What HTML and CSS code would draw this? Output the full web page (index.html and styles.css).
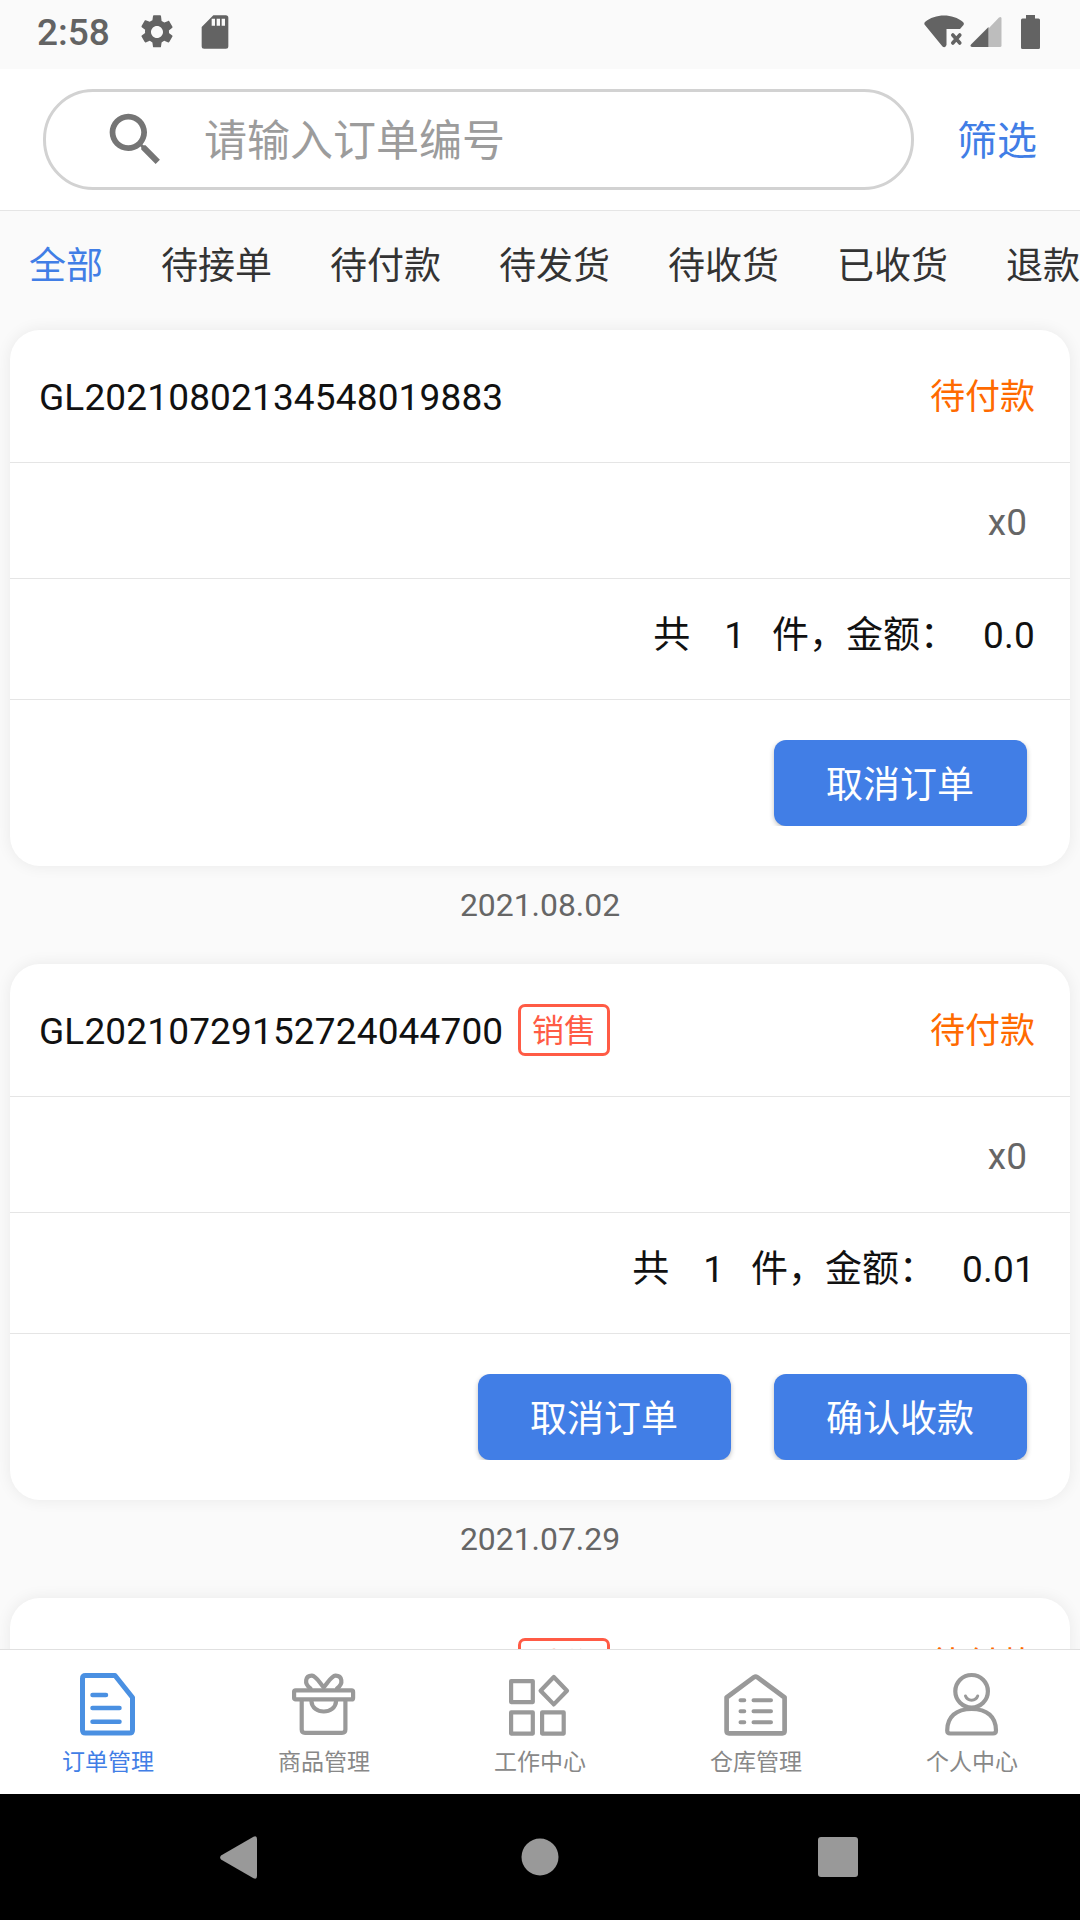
FILE: index.html
```html
<!DOCTYPE html>
<html lang="zh-CN">
<head>
    <meta charset="UTF-8">
    <meta name="viewport" content="width=device-width, initial-scale=1.0">
    <title>订单管理</title>
    <link rel="stylesheet" href="styles.css">
</head>
<body>
    <div class="app">
        <div class="status-bar">
            <span class="clock">2:58</span>
            <svg class="status-icon gear" viewBox="0 0 24 24"><path d="M19.14 12.94c.04-.3.06-.61.06-.94 0-.32-.02-.64-.07-.94l2.03-1.58c.18-.14.23-.41.12-.61l-1.92-3.32c-.12-.22-.37-.29-.59-.22l-2.39.96c-.5-.38-1.03-.7-1.62-.94L14.4 2.4c-.04-.24-.24-.4-.48-.4h-3.84c-.24 0-.43.16-.47.4l-.36 2.55c-.59.24-1.13.57-1.62.94l-2.39-.96c-.22-.08-.47 0-.59.22L2.74 8.47c-.12.21-.08.47.12.61l2.03 1.58c-.05.3-.09.63-.09.94s.02.64.07.94l-2.03 1.58c-.18.14-.23.41-.12.61l1.92 3.32c.12.22.37.29.59.22l2.39-.96c.5.38 1.03.7 1.62.94l.36 2.54c.05.24.24.41.48.41h3.84c.24 0 .44-.17.47-.41l.36-2.54c.59-.24 1.13-.56 1.62-.94l2.39.96c.22.08.47 0 .59-.22l1.92-3.32c.12-.22.07-.47-.12-.61l-2.01-1.58zM12 15.6c-1.98 0-3.6-1.62-3.6-3.6s1.62-3.6 3.6-3.6 3.6 1.62 3.6 3.6-1.62 3.6-3.6 3.6z"/></svg>
            <svg class="status-icon" viewBox="0 0 24 24"><path d="M18.500 2h-7.500L4 9V20.500Q4 22 5.500 22h13Q20 22 20 20.500V3.500Q20 2 18.500 2zM12 8.300h-2V4h2zM15 8.300h-2V4h2zM18 8.300h-2V4h2z"/></svg>
            <div class="status-right">
                <svg class="wifi" width="40" height="34" viewBox="0 0 40 34"><path d="M1 7C11-1.700 29-1.700 39 7Q40.500 8.500 39.500 10L36 14H22.500V30Q21 33.500 18.500 31.500L.500 9.500Q0 8 1 7z"/><path d="M28.800 20l7 8M35.800 20l-7 8" fill="none" stroke="#636363" stroke-width="3.600" stroke-linecap="round"/></svg>
                <svg class="signal" width="32" height="32" viewBox="0 0 32 32"><path d="M18.500 12.500L29 1.500Q31.500 0 31.500 2.500V29.500Q31.500 31 30 31H18.500z" fill="#bdbdbd"/><path d="M18.500 11V31H2Q-.500 30.500 1 28.500z"/></svg>
                <svg width="19" height="34" viewBox="0 0 19 34"><path d="M5 0h9v3.500h3.500Q19 3.500 19 5v27.500Q19 34 17.500 34h-16Q0 34 0 32.500V5Q0 3.500 1.500 3.500H5z"/></svg>
            </div>
        </div>

        <header class="header">
            <div class="search-box">
                <svg class="search-icon" viewBox="0 0 24 24"><path d="M15.5 14h-.79l-.28-.27C15.41 12.590 16 11.110 16 9.500 16 5.910 13.090 3 9.500 3S3 5.910 3 9.500 5.910 16 9.500 16c1.610 0 3.090-.59 4.230-1.570l.27.28v.79l5 4.990L20.490 19l-4.990-5zm-6 0C7.010 14 5 11.990 5 9.500S7.010 5 9.500 5 14 7.010 14 9.500 11.990 14 9.500 14z"/></svg>
                <span class="placeholder">请输入订单编号</span>
            </div>
            <a class="filter">筛选</a>
        </header>

        <nav class="tabs">
            <a class="tab active">全部</a>
            <a class="tab">待接单</a>
            <a class="tab">待付款</a>
            <a class="tab">待发货</a>
            <a class="tab">待收货</a>
            <a class="tab">已收货</a>
            <a class="tab">退款</a>
        </nav>

        <main class="order-list">
            <section class="card">
                <div class="card-head">
                    <span class="order-no">GL20210802134548019883</span>
                    <span class="state">待付款</span>
                </div>
                <div class="goods">x0</div>
                <div class="total">
                    <span>共</span>
                    <span class="count">1</span>
                    <span>件，金额：</span>
                    <span class="amount">0.0</span>
                </div>
                <div class="actions">
                    <button class="btn">取消订单</button>
                </div>
            </section>
            <p class="date">2021.08.02</p>

            <section class="card">
                <div class="card-head">
                    <span class="order-no">GL20210729152724044700</span>
                    <span class="tag">销售</span>
                    <span class="state">待付款</span>
                </div>
                <div class="goods">x0</div>
                <div class="total">
                    <span>共</span>
                    <span class="count">1</span>
                    <span>件，金额：</span>
                    <span class="amount">0.01</span>
                </div>
                <div class="actions">
                    <button class="btn">取消订单</button>
                    <button class="btn">确认收款</button>
                </div>
            </section>
            <p class="date">2021.07.29</p>

            <section class="card">
                <div class="card-head">
                    <span class="order-no"></span>
                    <span class="tag">销售</span>
                    <span class="state">待付款</span>
                </div>
            </section>
        </main>

        <footer class="bottom-bar">
            <a class="bottom-item active">
                <svg viewBox="0 0 66 66" stroke-width="5">
                    <path d="M10.500 4.500H40L57.500 26.500V59Q57.500 62 54.500 62H10.500Q7.500 62 7.500 59V7.500Q7.500 4.500 10.500 4.500z"/>
                    <path d="M17.500 24H31M17.500 37H44.500M17.500 50.700H44.500" stroke-width="4.500"/>
                </svg>
                <span>订单管理</span>
            </a>
            <a class="bottom-item">
                <svg viewBox="0 0 66 66" stroke-width="4.200">
                    <rect x="3.100" y="19.400" width="59" height="9" rx="1.500"/>
                    <path d="M10.700 30V58.500Q10.700 61.800 14 61.800H51Q54.400 61.800 54.400 58.500V30"/>
                    <path d="M20.400 30C21 44 44.500 44 45.100 30"/>
                    <path d="M19.500 17.500C12.500 12.500 14.500 4.500 21 4.700C25 5 28 11 32.700 16.500C37.400 11 40.400 5 44.400 4.700C51 4.500 53 12.500 46 17.500"/>
                </svg>
                <span>商品管理</span>
            </a>
            <a class="bottom-item">
                <svg viewBox="0 0 66 66" stroke-width="4.200">
                    <rect x="4.100" y="10.100" width="21.700" height="21"/>
                    <rect x="4.100" y="41.400" width="21.700" height="21.200"/>
                    <rect x="35.100" y="41.400" width="21.600" height="21.200"/>
                    <path d="M46.800 6L60 19.700L46.800 33.400L33.600 19.700z"/>
                </svg>
                <span>工作中心</span>
            </a>
            <a class="bottom-item">
                <svg viewBox="0 0 66 66" stroke-width="4.700">
                    <path d="M3.600 26.500L31 6.200Q32.600 5.200 34.200 6.200L61.600 26.500V60Q61.600 62.300 59.300 62.300H6Q3.600 62.300 3.600 60z"/>
                    <path d="M17.500 29.300H21.300M30.500 29.300H48M17.500 40.300H21.300M30.500 40.300H48M17.500 51.300H21.300M30.500 51.300H48" stroke-width="4"/>
                </svg>
                <span>仓库管理</span>
            </a>
            <a class="bottom-item">
                <svg viewBox="0 0 66 66" stroke-width="4.200">
                    <circle cx="32.600" cy="20.300" r="16.300"/>
                    <path d="M26.500 25C28.500 30.500 36.700 30.500 38.700 25" stroke-width="3"/>
                    <path d="M32.600 38C17 38 8.200 46 8.200 59.500Q8.200 62.500 11.200 62.500H54Q57 62.500 57 59.500C57 46 48.200 38 32.600 38z"/>
                </svg>
                <span>个人中心</span>
            </a>
        </footer>

        <div class="system-nav">
            <svg width="37" height="43" viewBox="0 0 37 43"><path d="M33.500.800Q37-.700 37 3V40Q37 43.700 33.500 42.200L1 23.500Q-.700 21.500 1 19.500z"/></svg>
            <svg class="home" width="38" height="38" viewBox="0 0 38 38"><circle cx="19" cy="19" r="18.500"/></svg>
            <svg width="40" height="40" viewBox="0 0 40 40"><rect width="40" height="40" rx="3"/></svg>
        </div>
    </div>
</body>
</html>
```

FILE: styles.css
```css
* {
    box-sizing: border-box;
}

body {
    margin: 0;
    background-color: #fafafa;
    font-family: Roboto, "Noto Sans CJK SC", sans-serif;
    font-size: 37px;
    color: #111;
}

.app {
    display: flex;
    flex-direction: column;
    width: 1080px;
    height: 1920px;
    overflow: hidden;
}

/* Status bar */
.status-bar {
    display: flex;
    align-items: center;
    height: 69px;
    padding: 0 39px 6px 37px;
    color: #636363;
    fill: #636363;
}

.clock {
    width: 100px;
    padding-top: 3px;
    font-size: 37px;
    font-weight: 500;
    line-height: 40px;
}

.status-icon {
    width: 40px;
    height: 40px;
    margin-right: 18px;
}

.status-right {
    display: flex;
    align-items: flex-end;
    margin-left: auto;
    padding-right: 1px;
}

.wifi {
    margin-right: 6px;
}

.signal {
    margin-right: 19px;
    margin-bottom: 1px;
}

/* Search */
.header {
    display: flex;
    align-items: center;
    height: 142px;
    padding: 0 43px;
    background-color: #fff;
    border-bottom: 1px solid #e5e5e5;
}

.search-box {
    display: flex;
    align-items: center;
    width: 871px;
    height: 101px;
    padding-left: 55px;
    border: 3px solid #d2d2d2;
    border-radius: 50px;
}

.search-icon {
    width: 69px;
    height: 69px;
    fill: #757575;
}

.placeholder {
    margin-left: 34px;
    padding-top: 3px;
    font-size: 43px;
    line-height: 60px;
    color: #9c9c9c;
}

.filter {
    margin-left: 43px;
    padding-top: 4px;
    font-size: 40px;
    line-height: 60px;
    color: #417ee6;
}

/* Order state tabs */
.tabs {
    display: flex;
    gap: 58px;
    height: 94px;
    padding: 30px 0 0 29px;
    font-size: 37px;
    line-height: 52px;
    white-space: nowrap;
    color: #333;
}

.tabs .active {
    color: #417ee6;
}

/* Orders */
.order-list {
    flex: 1;
    min-height: 0;
    padding: 25px 10px 0;
    overflow: hidden;
}

.card {
    height: 536px;
    background-color: #fff;
    border-radius: 30px;
    box-shadow: 0 0 16px rgba(0, 0, 0, 0.07);
}

.card-head {
    display: flex;
    align-items: center;
    height: 133px;
    padding: 0 35px 0 29px;
    border-bottom: 1px solid #e5e5e5;
}

.order-no {
    min-width: 466px;
    padding-top: 3px;
    letter-spacing: 0.15px;
}

.tag {
    width: 92px;
    height: 52px;
    margin-left: 13px;
    border: 3px solid #ff5b45;
    border-radius: 7px;
    font-size: 32px;
    line-height: 48px;
    text-align: center;
    color: #ff5b45;
}

.state {
    margin-left: auto;
    padding-bottom: 5px;
    font-size: 35px;
    color: #ff6a00;
}

.goods {
    height: 116px;
    padding: 35px 43px 0;
    border-bottom: 1px solid #e5e5e5;
    line-height: 50px;
    text-align: right;
    color: #666;
}

.total {
    display: flex;
    justify-content: flex-end;
    height: 121px;
    padding: 30px 35px 0;
    border-bottom: 1px solid #e5e5e5;
    line-height: 54px;
}

.count {
    margin: 0 27px 0 34px;
}

.amount {
    margin-left: 26px;
    letter-spacing: 0.2px;
}

.actions {
    display: flex;
    justify-content: flex-end;
    gap: 43px;
    padding: 40px 43px 0;
}

.btn {
    width: 253px;
    height: 86px;
    padding: 0 1px 3px 0;
    border: none;
    border-radius: 12px;
    background-color: #417ee6;
    box-shadow: 0 2px 5px rgba(0, 0, 0, 0.25);
    clip-path: inset(0 -6px);
    font-family: inherit;
    font-size: 37px;
    color: #fff;
}

.date {
    height: 98px;
    margin: 0;
    padding-top: 19px;
    font-size: 31.9px;
    line-height: 40px;
    text-align: center;
    color: #666;
}

/* Bottom tab bar */
.bottom-bar {
    display: flex;
    height: 145px;
    background-color: #fff;
    border-top: 1px solid #e0e0e0;
}

.bottom-item {
    display: flex;
    flex-direction: column;
    align-items: center;
    width: 216px;
    padding-top: 21px;
    font-size: 23px;
    line-height: 30px;
    color: #888;
    stroke: #999;
}

.bottom-item svg {
    width: 66px;
    height: 66px;
    margin-bottom: 11px;
    fill: none;
    stroke-linecap: round;
    stroke-linejoin: round;
}

.bottom-item span {
    stroke: none;
}

.bottom-item.active {
    color: #417ee6;
    stroke: #4a90e2;
}

/* Android navigation */
.system-nav {
    display: flex;
    align-items: center;
    justify-content: space-between;
    height: 126px;
    padding: 0 222px 0 220px;
    background-color: #000;
    fill: #999;
}

.home {
    margin-left: 4px;
}
```
